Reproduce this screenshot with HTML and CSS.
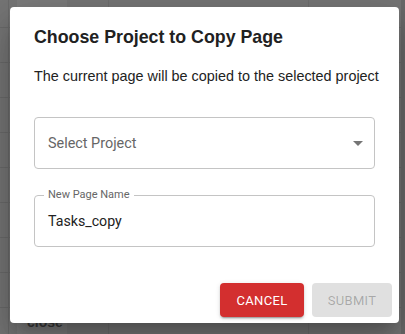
FILE: index.html
```html
<!DOCTYPE html>
<html>
<head>
<meta charset="utf-8">
<link rel="stylesheet" href="styles.css">
</head>
<body>
<div class="page">
  <div class="table">
    <div class="row top"><div class="c c0"></div><div class="c c1"></div><div class="c c2"></div><div class="c c3"></div><div class="c c4"></div></div>
    <div class="row"><div class="c c0"></div><div class="c c1"></div><div class="c c2"></div><div class="c c3"></div><div class="c c4"></div></div>
    <div class="row"><div class="c c0"></div><div class="c c1"></div><div class="c c2"></div><div class="c c3"></div><div class="c c4"></div></div>
    <div class="row"><div class="c c0"></div><div class="c c1"></div><div class="c c2"></div><div class="c c3"></div><div class="c c4"></div></div>
    <div class="row"><div class="c c0"></div><div class="c c1"></div><div class="c c2"></div><div class="c c3"></div><div class="c c4"></div></div>
    <div class="row"><div class="c c0"></div><div class="c c1"></div><div class="c c2"></div><div class="c c3"></div><div class="c c4"></div></div>
    <div class="row"><div class="c c0"></div><div class="c c1"></div><div class="c c2"></div><div class="c c3"></div><div class="c c4"></div></div>
    <div class="row"><div class="c c0"></div><div class="c c1"></div><div class="c c2"></div><div class="c c3"></div><div class="c c4"></div></div>
    <div class="row"><div class="c c0"></div><div class="c c1"></div><div class="c c2"></div><div class="c c3"></div><div class="c c4"></div></div>
    <div class="row"><div class="c c0"></div><div class="c c1"><span class="chip">close</span></div><div class="c c2"></div><div class="c c3"></div><div class="c c4"></div></div>
  </div>
  <div class="scrollbar"></div>

  <div class="dialog">
    <h2 class="title">Choose Project to Copy Page</h2>
    <div class="content">
      <p class="text">The current page will be copied to the selected project</p>
      <div class="select">
        <span class="placeholder">Select Project</span>
        <svg class="arrow" width="24" height="24" viewBox="0 0 24 24"><path d="M7 10l5 5 5-5z" fill="rgba(0,0,0,0.54)"/></svg>
      </div>
      <div class="field">
        <span class="legend">New Page Name</span>
        <span class="value">Tasks_copy</span>
      </div>
    </div>
    <div class="actions">
      <button class="btn cancel">CANCEL</button>
      <button class="btn submit" disabled>SUBMIT</button>
    </div>
  </div>
</div>
</body>
</html>
```
FILE: styles.css
```css
* { box-sizing: border-box; }
html, body { margin: 0; padding: 0; }
body {
  width: 405px;
  height: 334px;
  overflow: hidden;
  background: #767676;
  font-family: "Liberation Sans", Arial, sans-serif;
}
.page {
  position: relative;
  width: 405px;
  height: 334px;
  overflow: hidden;
}
.table {
  display: flex;
  flex-direction: column;
}
.row {
  display: flex;
  flex: none;
  height: 35px;
  border-bottom: 1px solid #6b6b6b;
}
.row.top { height: 28px; }
.c { height: 100%; }
.c0 { width: 9px; border-right: 1px solid #6b6b6b; }
.c1 {
  width: 59px;
  display: flex;
  align-items: flex-start;
  background: linear-gradient(to right, #767676 0 8px, #7c7c7c 8px 58px, #767676 58px);
}
.c2 { width: 41px; border-right: 1px solid #6e6e6e; }
.c3 { width: 200px; border-right: 1px solid #6e6e6e; }
.c4 { flex: 1; }
.chip {
  font-family: "Liberation Sans", Arial, sans-serif;
  font-size: 14px;
  font-weight: bold;
  color: #3a3a3a;
  padding-left: 18px;
  margin-top: 6px;
}
.scrollbar {
  position: absolute;
  right: 0;
  top: 0;
  width: 4px;
  height: 334px;
  background: #6a6a6a;
}
.dialog {
  position: absolute;
  left: 10px;
  top: 7px;
  width: 389px;
  height: 316px;
  background: #fff;
  border-radius: 4px;
  box-shadow: 0 11px 15px -7px rgba(0,0,0,0.2), 0 24px 38px 3px rgba(0,0,0,0.14), 0 9px 46px 8px rgba(0,0,0,0.12);
  display: flex;
  flex-direction: column;
}
.title {
  margin: 0;
  padding: 16px 24px 13px;
  font-size: 17.8px;
  line-height: 28px;
  font-weight: bold;
  color: #212121;
  white-space: nowrap;
  flex: none;
}
.content {
  padding: 0 24px;
  display: flex;
  flex-direction: column;
  flex: none;
}
.text {
  margin: 0;
  font-size: 14.4px;
  line-height: 24px;
  color: #222;
  white-space: nowrap;
}
.select {
  margin-top: 29px;
  height: 52px;
  border: 1px solid #c4c4c4;
  border-radius: 4px;
  display: flex;
  align-items: center;
  padding: 0 4px 0 13px;
  justify-content: space-between;
}
.placeholder {
  font-family: Roboto, sans-serif;
  font-size: 14.4px;
  color: #666;
}
.field {
  position: relative;
  margin-top: 26px;
  height: 52px;
  border: 1px solid #c4c4c4;
  border-radius: 4px;
  padding: 0 13px;
  display: flex;
  align-items: center;
}
.legend {
  position: absolute;
  left: 9px;
  top: -7px;
  font-family: Roboto, sans-serif;
  font-size: 11px;
  line-height: 12px;
  color: #666;
  padding: 0 4px;
  background: #fff;
}
.value {
  font-family: Roboto, sans-serif;
  font-size: 14.2px;
  color: #222;
}
.actions {
  margin-top: auto;
  display: flex;
  justify-content: flex-end;
  gap: 8px;
  padding: 8px 7px 6px 8px;
}
.btn {
  font-family: Roboto, sans-serif;
  font-size: 13px;
  font-weight: 400;
  letter-spacing: 0.3px;
  height: 34px;
  border: none;
  border-radius: 4px;
  padding: 0 8px;
}
.cancel {
  width: 84px;
  background: #d32f2f;
  color: #fff;
  box-shadow: 0 3px 1px -2px rgba(0,0,0,0.2), 0 2px 2px 0 rgba(0,0,0,0.14), 0 1px 5px 0 rgba(0,0,0,0.12);
}
.submit {
  width: 80px;
  background: #e0e0e0;
  color: rgba(0,0,0,0.26);
}
```
